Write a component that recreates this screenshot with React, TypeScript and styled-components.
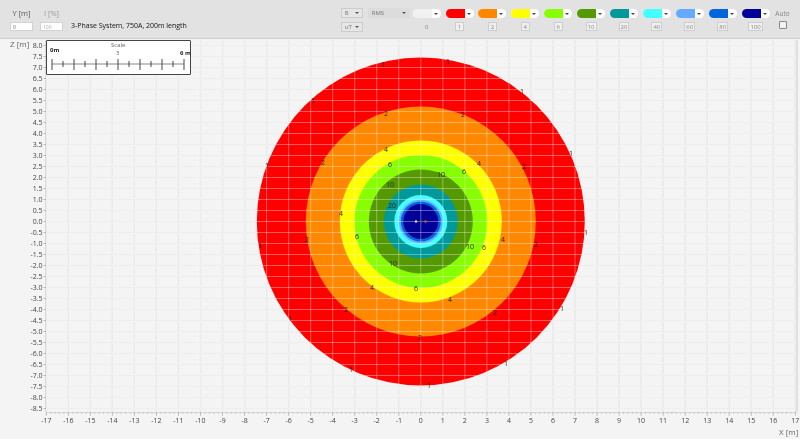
import React from 'react';
import styled, { createGlobalStyle } from 'styled-components';

const CX = 420.8;
const CY = 221.5;
const UNIT_X = 22.03;
const UNIT_Y = 22;

const rings = [
  { r: 164, color: '#ff0000' },
  { r: 115, color: '#ff8800' },
  { r: 81, color: '#ffff00' },
  { r: 66.5, color: '#88ff00' },
  { r: 52, color: '#559900' },
  { r: 37, color: '#009999' },
  { r: 26.5, color: '#44ffff' },
  { r: 22, color: '#66aaff' },
  { r: 20, color: '#0066dd' },
  { r: 17.5, color: '#000099' },
];

const legend = [
  { value: '0', color: '#f1f1f1', plain: true },
  { value: '1', color: '#ff0000' },
  { value: '2', color: '#ff8800' },
  { value: '4', color: '#ffff00' },
  { value: '6', color: '#88ff00' },
  { value: '10', color: '#559900' },
  { value: '20', color: '#009999' },
  { value: '40', color: '#44ffff' },
  { value: '60', color: '#66aaff' },
  { value: '80', color: '#0066dd' },
  { value: '100', color: '#000099' },
];

const contourLabels: [string, number, number][] = [
  ['1', 383, 64], ['1', 313, 100], ['1', 267, 165], ['1', 448, 61], ['1', 522, 91], ['1', 571, 153],
  ['1', 260, 245], ['1', 290, 318], ['1', 351, 369], ['1', 586, 232], ['1', 562, 308], ['1', 506, 363], ['1', 429, 385],
  ['2', 386, 113], ['2', 323, 162], ['2', 463, 114], ['2', 524, 166], ['2', 307, 239], ['2', 346, 309],
  ['2', 420, 337], ['2', 536, 244], ['2', 495, 312],
  ['4', 386, 149], ['4', 341, 213], ['4', 479, 163], ['4', 372, 287], ['4', 503, 239], ['4', 450, 299],
  ['6', 390, 164], ['6', 464, 171], ['6', 357, 236], ['6', 416, 288], ['6', 484, 247],
  ['10', 390, 184], ['10', 441, 174], ['10', 393, 263], ['10', 470, 246],
  ['20', 392, 205],
];

const range = (from: number, to: number) => {
  const out: number[] = [];
  for (let i = from; i <= to; i++) out.push(i);
  return out;
};

const GlobalStyle = createGlobalStyle`
  html, body {
    margin: 0;
    padding: 0;
    background: #f4f4f4;
  }
  body {
    font-family: "Open Sans", "Liberation Sans", sans-serif;
  }
`;

const Page = styled.div`
  width: 800px;
  height: 439px;
  display: flex;
  flex-direction: column;
  overflow: hidden;
  background: #f4f4f4;
  filter: blur(0.4px);
`;

const Toolbar = styled.div`
  height: 39px;
  box-sizing: border-box;
  flex-shrink: 0;
  display: flex;
  align-items: flex-start;
  padding: 9px 10px 0 10px;
  background: #e2e2e2;
  border-bottom: 1px solid #cfcfcf;
`;

const Field = styled.div`
  width: 23px;
  margin-right: 7px;
  display: flex;
  flex-direction: column;
  align-items: center;
  gap: 4px;
`;

const FieldLabel = styled.div<{ $muted?: boolean }>`
  height: 9px;
  line-height: 9px;
  font-size: 7.5px;
  white-space: nowrap;
  color: ${p => (p.$muted ? '#999' : '#555')};
`;

const FieldInput = styled.div<{ $muted?: boolean }>`
  width: 23px;
  height: 9px;
  box-sizing: border-box;
  padding-left: 2px;
  line-height: 8px;
  font-size: 5px;
  background: #fff;
  border: 1px solid #d2d2d2;
  color: ${p => (p.$muted ? '#aaa' : '#666')};
`;

const Title = styled.div`
  margin: 12px 0 0 1px;
  height: 9px;
  line-height: 9px;
  font-size: 7px;
  font-weight: 500;
  white-space: nowrap;
  color: #111;
`;

const RightGroup = styled.div`
  margin-left: auto;
  display: flex;
  align-items: flex-start;
`;

const Selects = styled.div`
  width: 69.5px;
  display: grid;
  grid-template-columns: 22px 42px;
  column-gap: 5px;
  row-gap: 4px;
  margin-top: -1px;
`;

const Select = styled.div<{ $flat?: boolean }>`
  height: 10px;
  box-sizing: border-box;
  padding-left: 3px;
  line-height: 9px;
  font-size: 6px;
  color: #777;
  position: relative;
  background: ${p => (p.$flat ? '#dcdcdc' : '#e6e6e6')};
  border: 1px solid ${p => (p.$flat ? '#dcdcdc' : '#cccccc')};

  &::after {
    content: '';
    position: absolute;
    right: 3px;
    top: 3px;
    border-left: 2px solid transparent;
    border-right: 2px solid transparent;
    border-top: 2px solid #555;
  }
`;

const LegendItem = styled.div`
  width: 32.9px;
  display: flex;
  flex-direction: column;
  align-items: center;
  gap: 4px;
`;

const Pill = styled.div<{ $color: string }>`
  width: 28px;
  height: 9px;
  border-radius: 5px;
  overflow: hidden;
  display: flex;
  background: #fff;
  position: relative;

  &::before {
    content: '';
    width: 19px;
    background: ${p => p.$color};
  }

  &::after {
    content: '';
    position: absolute;
    right: 3px;
    top: 4px;
    border-left: 2px solid transparent;
    border-right: 2px solid transparent;
    border-top: 2px solid #444;
  }
`;

const LegendValue = styled.div<{ $plain?: boolean }>`
  min-width: 9px;
  height: 9px;
  box-sizing: border-box;
  padding: 0 1px;
  line-height: 8px;
  text-align: center;
  font-size: 6px;
  color: #888;
  background: ${p => (p.$plain ? 'transparent' : '#f0f0f0')};
  border: 1px solid ${p => (p.$plain ? 'transparent' : '#cdcdcd')};
`;

const AutoBox = styled.div`
  width: 15px;
  margin-left: 3px;
  display: flex;
  flex-direction: column;
  align-items: center;
  gap: 3px;
`;

const AutoLabel = styled.div`
  height: 9px;
  line-height: 9px;
  font-size: 6.5px;
  color: #888;
`;

const Check = styled.div`
  width: 8px;
  height: 8px;
  box-sizing: border-box;
  border: 1px solid #888;
  border-radius: 1px;
  background: #f2f2f2;
`;

const ChartArea = styled.div`
  flex: 1;
  position: relative;
`;

const ChartSvg = styled.svg`
  display: block;
  width: 800px;
  height: 400px;
`;

const ScaleBox = styled.div`
  position: absolute;
  left: 46px;
  top: 1px;
  width: 145px;
  height: 35px;
  box-sizing: border-box;
  background: #fff;
  border: 1px solid #444;
  border-radius: 1px;
`;

const ScaleText = styled.span<{ $left: number; $top: number; $bold?: boolean }>`
  position: absolute;
  left: ${p => p.$left}px;
  top: ${p => p.$top}px;
  line-height: 7px;
  font-size: 6px;
  white-space: nowrap;
  font-weight: ${p => (p.$bold ? 700 : 400)};
  color: ${p => (p.$bold ? '#222' : '#666')};
`;

const Ruler = styled.svg`
  position: absolute;
  left: 0;
  top: 0;
`;

const ScaleBar = () => (
  <ScaleBox>
    <ScaleText $left={64} $top={1}>Scale</ScaleText>
    <ScaleText $left={3} $top={6} $bold>0m</ScaleText>
    <ScaleText $left={69} $top={9}>3</ScaleText>
    <ScaleText $left={133} $top={9} $bold>6 m</ScaleText>
    <Ruler width="143" height="33">
      <line x1="5" y1="23" x2="137" y2="23" stroke="#555" strokeWidth="0.7" />
      {range(0, 12).map(i => (
        <line
          key={i}
          x1={5 + i * 11}
          x2={5 + i * 11}
          y1={i % 2 ? 20 : 18}
          y2={i % 2 ? 26 : 29}
          stroke="#333"
          strokeWidth="0.9"
        />
      ))}
    </Ruler>
  </ScaleBox>
);

const Chart = () => {
  const xs = range(-17, 17);
  const ys = range(-17, 16);
  return (
    <ChartSvg viewBox="0 39 800 400" fontFamily="'Open Sans', 'Liberation Sans', sans-serif">
      {xs.map(v => (
        <line key={v} x1={CX + v * UNIT_X} x2={CX + v * UNIT_X} y1={40} y2={412} stroke="#e1e1e1" strokeWidth="1.2" />
      ))}
      {ys.map(v => (
        <line key={v} x1={46} x2={797} y1={CY - v * UNIT_Y * 0.5} y2={CY - v * UNIT_Y * 0.5} stroke="#e5e5e5" strokeWidth="1" />
      ))}
      {rings.map(ring => (
        <circle key={ring.r} cx={CX} cy={CY} r={ring.r} fill={ring.color} />
      ))}
      {xs.map(v => (
        <line key={v} x1={CX + v * UNIT_X} x2={CX + v * UNIT_X} y1={40} y2={412} stroke="#fff" strokeOpacity="0.35" strokeWidth="1" />
      ))}
      {ys.map(v => (
        <line key={v} x1={46} x2={797} y1={CY - v * UNIT_Y * 0.5} y2={CY - v * UNIT_Y * 0.5} stroke="#fff" strokeOpacity="0.35" strokeWidth="1" />
      ))}
      <circle cx={416} cy={221.5} r={1.2} fill="#e8e0a0" />
      <circle cx={421} cy={221.5} r={1} fill="#557733" />
      <circle cx={425.5} cy={221.5} r={1.2} fill="#e05a30" />
      {contourLabels.map(([text, x, y]) => (
        <text key={`${text}-${x}-${y}`} x={x} y={y + 2.5} fontSize="7" textAnchor="middle" fill="#26261a">
          {text}
        </text>
      ))}

      <line x1={46} x2={797} y1={412.5} y2={412.5} stroke="#cfcfcf" strokeWidth="0.8" />
      <line x1={45.5} x2={45.5} y1={40} y2={412} stroke="#d5d5d5" strokeWidth="0.8" />
      <line x1={797} x2={797} y1={40} y2={412} stroke="#c4c4c4" strokeWidth="0.8" />
      {range(0, 170).map(i => {
        const major = i % 5 === 0;
        const x = CX + (i / 5 - 17) * UNIT_X;
        return <line key={i} x1={x} x2={x} y1={412.5} y2={major ? 415.5 : 414} stroke={major ? '#888' : '#aaa'} strokeWidth="0.6" />;
      })}
      {ys.map(v => (
        <line key={v} x1={43.5} x2={46} y1={CY - v * UNIT_Y * 0.5} y2={CY - v * UNIT_Y * 0.5} stroke="#999" strokeWidth="0.6" />
      ))}
      {xs.map(v => (
        <text key={v} x={CX + v * UNIT_X} y={422.5} fontSize="7" textAnchor="middle" fill="#444">
          {v}
        </text>
      ))}
      {ys.map(v => (
        <text key={v} x={42.5} y={CY - v * UNIT_Y * 0.5 + 2.5} fontSize="7" textAnchor="end" fill="#444">
          {(v / 2).toFixed(1)}
        </text>
      ))}
      <text x={10} y={47} fontSize="8" fill="#666">Z [m]</text>
      <text x={779} y={435} fontSize="8" fill="#666">X [m]</text>
    </ChartSvg>
  );
};

export default function App() {
  return (
    <>
      <GlobalStyle />
      <Page>
        <Toolbar>
          <Field>
            <FieldLabel>Y [m]</FieldLabel>
            <FieldInput>0</FieldInput>
          </Field>
          <Field>
            <FieldLabel $muted>I [%]</FieldLabel>
            <FieldInput $muted>100</FieldInput>
          </Field>
          <Title>3-Phase System, 750A, 200m length</Title>
          <RightGroup>
            <Selects>
              <Select>B</Select>
              <Select $flat>RMS</Select>
              <Select>uT</Select>
            </Selects>
            {legend.map(item => (
              <LegendItem key={item.value}>
                <Pill $color={item.color} />
                <LegendValue $plain={item.plain}>{item.value}</LegendValue>
              </LegendItem>
            ))}
            <AutoBox>
              <AutoLabel>Auto</AutoLabel>
              <Check />
            </AutoBox>
          </RightGroup>
        </Toolbar>
        <ChartArea>
          <Chart />
          <ScaleBar />
        </ChartArea>
      </Page>
    </>
  );
}
